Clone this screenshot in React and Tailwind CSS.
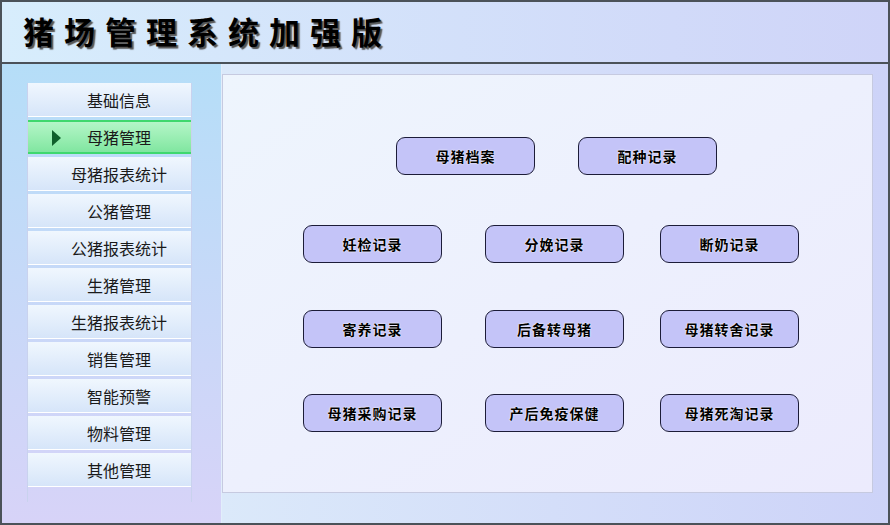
import React from 'react'

const MENU = ['基础信息', '母猪管理', '母猪报表统计', '公猪管理', '公猪报表统计', '生猪管理', '生猪报表统计', '销售管理', '智能预警', '物料管理', '其他管理']

const ROWS = [
  { pl: 'pl-[173px]', mt: 'mt-[62px]', items: ['母猪档案', '配种记录'] },
  { pl: 'pl-[80px]', mt: 'mt-[50px]', items: ['妊检记录', '分娩记录', '断奶记录'] },
  { pl: 'pl-[80px]', mt: 'mt-[47px]', items: ['寄养记录', '后备转母猪', '母猪转舍记录'] },
  { pl: 'pl-[80px]', mt: 'mt-[46px]', items: ['母猪采购记录', '产后免疫保健', '母猪死淘记录'] },
]

const CJK = { fontFamily: '"Noto Sans CJK SC", "Noto Sans", sans-serif' }

function MenuItem({ label, active }) {
  if (active) {
    return (
      <div className="relative h-[34px] flex items-center justify-center pl-[19px] border-y-2 border-[#3fd86e] bg-gradient-to-b from-[#b4f6c8] to-[#80e6a0] text-[16px] text-[#1a1a1a]">
        <span className="absolute left-[24px] top-[8px] w-0 h-0 border-y-[8px] border-y-transparent border-l-[9px] border-l-[#0f5f2c]" />
        {label}
      </div>
    )
  }
  return (
    <div className="h-[34px] flex items-center justify-center pl-[19px] border-b border-white bg-gradient-to-b from-[#f0f7fe] to-[#d6e5f9] text-[16px] text-[#1a1a1a]">
      {label}
    </div>
  )
}

export default function App() {
  return (
    <div className="w-[890px] h-[525px] flex flex-col border-2 border-[#4b5259] bg-[#d8e6fa] overflow-hidden" style={CJK}>
      {/* header */}
      <div className="h-[62px] shrink-0 flex items-center pl-[21px] border-b-2 border-[#4b5259] bg-gradient-to-r from-[#d7edfc] to-[#cfd4f8]">
        <h1 className="text-[31px] font-bold tracking-[10px] text-black [text-shadow:2px_2px_1px_#555555] leading-none -mt-[4px]">
          猪场管理系统加强版
        </h1>
      </div>

      <div className="flex flex-1 min-h-0">
        {/* sidebar */}
        <div className="w-[220px] shrink-0 pt-[19px] pl-[25px] border-r border-[#e2eefb] bg-gradient-to-b from-[#b5def8] to-[#d7d3f8]">
          <div className="w-[165px] h-[419px] flex flex-col gap-[3px] border-x border-[#c9d2ee]">
            {MENU.map(m => (
              <MenuItem key={m} label={m} active={m === '母猪管理'} />
            ))}
          </div>
        </div>

        {/* content */}
        <div className="flex-1 pt-[10px] pr-[15px] pb-[30px] bg-gradient-to-r from-[#dbe9fa] to-[#cdd3f8]">
          <div className="h-full border border-[#c6cae0] bg-gradient-to-br from-[#eef5fd] to-[#ecebfd]">
            {ROWS.map((row, i) => (
              <div key={i} className={`flex ${row.pl} ${row.mt}`}>
                {row.items.map((b, j) => (
                  <button
                    key={b}
                    className={`w-[139px] h-[38px] rounded-[9px] border border-[#1c1c38] bg-[#c4c4f8] text-[14px] font-bold tracking-[1px] text-black [text-shadow:0_0_2px_#ffffff,0_0_1px_#ffffff] ${j === 0 ? '' : j === 1 ? 'ml-[43px]' : 'ml-[36px]'}`}
                  >
                    {b}
                  </button>
                ))}
              </div>
            ))}
          </div>
        </div>
      </div>
    </div>
  )
}
